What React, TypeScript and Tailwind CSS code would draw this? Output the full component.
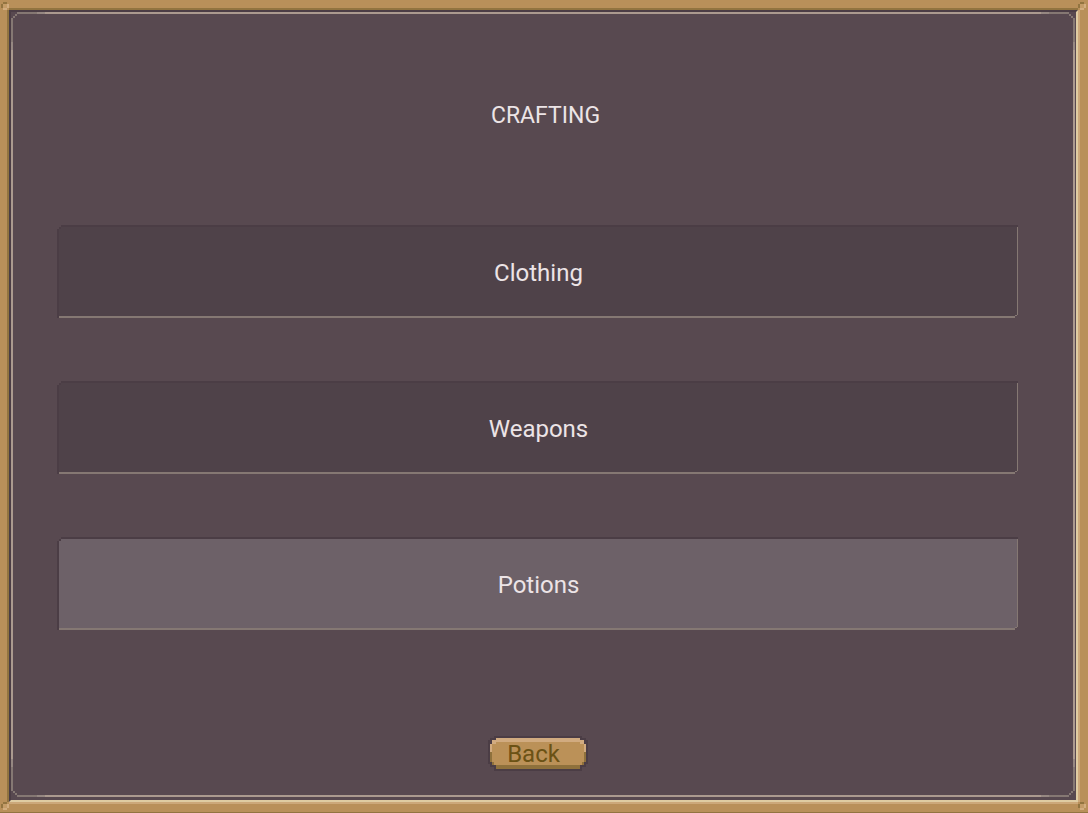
import React from "react";

type Category = { name: string; selected: boolean };

const categories: Category[] = [
  { name: "Clothing", selected: false },
  { name: "Weapons", selected: false },
  { name: "Potions", selected: true },
];

function Rivet({ className }: { className: string }) {
  return (
    <svg
      aria-hidden="true"
      viewBox="0 0 8 8"
      shapeRendering="crispEdges"
      className={`pointer-events-none absolute size-2 ${className}`}
    >
      <rect width="8" height="8" fill="#b9905a" />
      <path d="M2 0h4v2H2zM0 2h2v4H0z" fill="#927440" />
      <path d="M2 2h4v4H2z" fill="#c49c68" />
      <path d="M6 2h2v4H6zM2 6h4v2H2z" fill="#d2ad80" />
    </svg>
  );
}

function Chamfer({ className }: { className: string }) {
  return (
    <svg
      aria-hidden="true"
      viewBox="0 0 6 6"
      shapeRendering="crispEdges"
      className={`size-[6px] ${className}`}
    >
      <path d="M4 2h2v2H4zM2 4h2v2H2z" fill="#857873" />
    </svg>
  );
}

const horizontal =
  "bg-[linear-gradient(to_right,#857873_20px,#968882_20px,#968882_28px,#ab9a8f_28px,#ab9a8f_calc(100%-28px),#968882_calc(100%-28px),#968882_calc(100%-20px),#857873_calc(100%-20px))]";
const vertical =
  "bg-[linear-gradient(to_bottom,#857873_24px,#968882_24px,#968882_32px,#ab9a8f_32px,#ab9a8f_calc(100%-32px),#968882_calc(100%-32px),#968882_calc(100%-24px),#857873_calc(100%-24px))]";

function CategoryButton({ name, selected }: Category) {
  const fill = selected ? "bg-[#6d6168]" : "bg-[#4f4249]";
  return (
    <button
      type="button"
      aria-pressed={selected}
      className={`relative h-[93px] w-full pt-[2px] pl-[2px] text-2xl text-[#ece4e6] ${fill} shadow-[inset_2px_0_#4b3d45,inset_0_-2px_#857873,inset_0_2px_#4b3d45,inset_-1px_0_#857873] [clip-path:polygon(0_4px,2px_4px,2px_2px,4px_2px,4px_0,100%_0,100%_calc(100%-3px),calc(100%-1px)_calc(100%-3px),calc(100%-1px)_calc(100%-2px),calc(100%-3px)_calc(100%-2px),calc(100%-3px)_100%,0_100%)] before:absolute before:top-[2px] before:left-[2px] before:size-[2px] before:bg-[#4b3d45] after:absolute after:right-[1px] after:bottom-[2px] after:h-px after:w-[2px] after:bg-[#857873]`}
    >
      {name}
    </button>
  );
}

function BackButton() {
  return (
    <button type="button" className="relative h-9 w-[100px] pr-2 text-2xl text-[#6b5215]">
      <svg
        aria-hidden="true"
        viewBox="0 0 100 36"
        shapeRendering="crispEdges"
        className="absolute inset-0 h-full w-full"
      >
        <path
          d="M6 0h88v2h4v2h2v24h-2v3h-4v4H6v-4H2v-3H0V4h2V2h4z"
          fill="#4b3d45"
        />
        <path d="M8 2h84v2h4v4h2v18h-2v3h-4v4H8v-4H4v-3H2V8h2V4h4z" fill="#bb9158" />
        <path d="M8 2h84v2h4v4h2v8h-2V8h-4V6H8v2H4v8H2V8h2V4h4z" fill="#d1ab80" />
        <path d="M2 16h2v10H2zM96 16h2v10h-2zM4 26h2v3h88v-3h2v3h-4v4H8v-4H4z" fill="#8f713c" />
      </svg>
      <span className="relative">Back</span>
    </button>
  );
}

export default function App() {
  return (
    <div className="relative flex min-h-screen flex-col border-b border-[#927440] bg-[#b9905a] pt-2 pr-2 pb-2 pl-[7px] font-[Roboto,sans-serif]">
      <div className="flex flex-1 flex-col border-2 border-t-[#927440] border-r-[#cca87a] border-b-[#cca87a] border-l-[#927440]">
        <div className="flex flex-1 flex-col border-2 border-t-[#4b3d45] border-r-[#dfcca2] border-b-[#dfcca2] border-l-[#4b3d45] bg-[#584950] pr-px pb-[3px]">
          <div className="grid flex-1 grid-cols-[6px_minmax(0,1fr)_6px] grid-rows-[6px_1fr_6px]">
            <Chamfer className="" />
            <div className={`h-[2px] ${horizontal}`} />
            <Chamfer className="-scale-x-100" />

            <div className={`w-[2px] ${vertical}`} />
            <main className="flex flex-col items-center pt-[82px] pr-[51px] pb-4 pl-10">
              <h1 className="pl-4 text-[23px] leading-8 text-[#ece4e6]">CRAFTING</h1>
              <nav aria-label="Crafting categories" className="mt-[93px] flex w-full flex-col gap-[63px]">
                {categories.map((category) => (
                  <CategoryButton key={category.name} {...category} />
                ))}
              </nav>
              <div className="mt-[106px] flex">
                <BackButton />
              </div>
            </main>
            <div className={`w-[2px] justify-self-end ${vertical}`} />

            <Chamfer className="-scale-y-100" />
            <div className={`h-[2px] self-end ${horizontal}`} />
            <Chamfer className="-scale-100" />
          </div>
        </div>
      </div>
      <Rivet className="top-[2px] left-px" />
      <Rivet className="top-[2px] right-[2px]" />
      <Rivet className="bottom-[2px] left-px" />
      <Rivet className="right-[2px] bottom-[2px]" />
    </div>
  );
}
